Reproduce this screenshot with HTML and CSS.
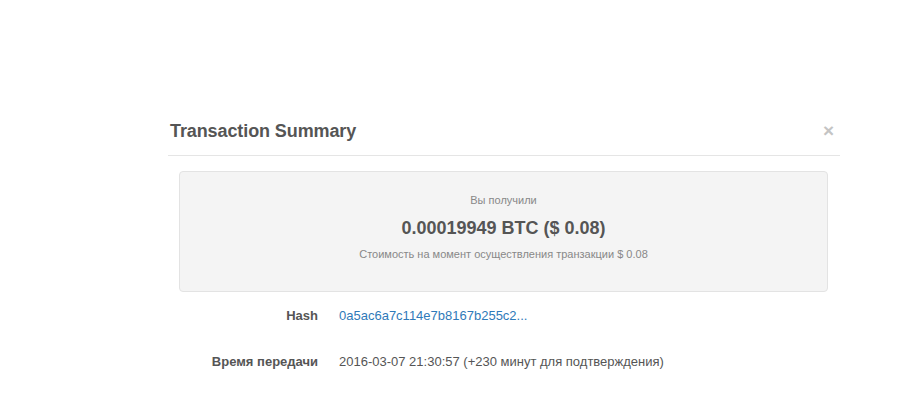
FILE: index.html
```html
<!DOCTYPE html>
<html lang="ru">
<head>
<meta charset="utf-8">
<title>Transaction Summary</title>
<link rel="stylesheet" href="styles.css">
</head>
<body>
<div class="page">
  <div class="modal">
    <div class="modal-header">
      <h4 class="modal-title">Transaction Summary</h4>
      <button class="close" type="button">&times;</button>
    </div>
    <div class="modal-body">
      <div class="summary">
        <div class="summary-label">Вы получили</div>
        <div class="summary-amount">0.00019949 BTC ($ 0.08)</div>
        <div class="summary-note">Стоимость на момент осуществления транзакции $ 0.08</div>
      </div>
      <dl class="details">
        <div class="row">
          <dt>Hash</dt>
          <dd><a href="#">0a5ac6a7c114e7b8167b255c2...</a></dd>
        </div>
        <div class="row">
          <dt>Время передачи</dt>
          <dd>2016-03-07 21:30:57 (+230 минут для подтверждения)</dd>
        </div>
      </dl>
    </div>
  </div>
</div>
</body>
</html>
```
FILE: styles.css
```css
html, body {
  margin: 0;
  padding: 0;
  background: #fff;
  font-family: "Liberation Sans", Arial, Helvetica, sans-serif;
  color: #555;
}
.page {
  padding-top: 110px;
}
.modal {
  margin-left: 168px;
  width: 672px;
}
.modal-header {
  display: flex;
  align-items: center;
  justify-content: space-between;
  padding: 11px 2px 14px;
  border-bottom: 1px solid #e5e5e5;
}
.modal-title {
  margin: 0;
  font-size: 18px;
  line-height: 20px;
  font-weight: bold;
  color: #555;
  letter-spacing: -0.1px;
}
.close {
  border: 0;
  background: transparent;
  padding: 0;
  margin-right: 4px;
  font-family: "Liberation Sans", Arial, sans-serif;
  font-size: 19px;
  font-weight: bold;
  line-height: 20px;
  color: #c4c4c4;
  cursor: pointer;
}
.modal-body {
  padding: 15px 12px 0 11px;
}
.summary {
  background: #f4f4f4;
  border: 1px solid #e3e3e3;
  border-radius: 4px;
  padding: 21px 10px 29px;
  text-align: center;
}
.summary-label {
  font-size: 11px;
  line-height: 15px;
  color: #888;
}
.summary-amount {
  margin-top: 9px;
  font-size: 18px;
  line-height: 22px;
  font-weight: bold;
  color: #555;
}
.summary-note {
  margin-top: 8px;
  font-size: 11px;
  line-height: 15px;
  color: #888;
}
.details {
  margin: 14px 0 0;
}
.row {
  display: grid;
  grid-template-columns: 139px 1fr;
  column-gap: 21px;
  font-size: 13px;
  line-height: 20px;
  margin-bottom: 26px;
}
.row dt {
  text-align: right;
  font-weight: bold;
  color: #555;
}
.row dd {
  margin: 0;
  color: #555;
}
.row a {
  color: #2f7ab9;
  text-decoration: none;
}
```
